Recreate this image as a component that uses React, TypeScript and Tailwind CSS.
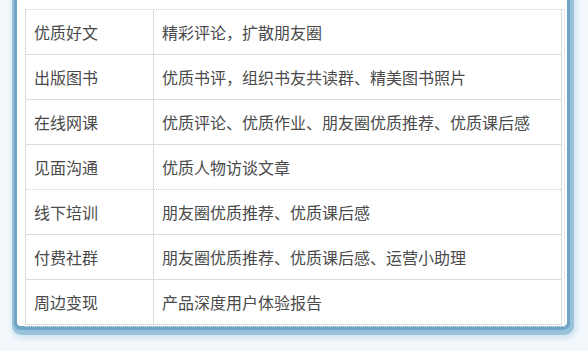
const rows: [string, string, boolean][] = [
  ['优质好文', '精彩评论，扩散朋友圈', false],
  ['出版图书', '优质书评，组织书友共读群、精美图书照片', false],
  ['在线网课', '优质评论、优质作业、朋友圈优质推荐、优质课后感', false],
  ['见面沟通', '优质人物访谈文章', true],
  ['线下培训', '朋友圈优质推荐、优质课后感', false],
  ['付费社群', '朋友圈优质推荐、优质课后感、运营小助理', false],
  ['周边变现', '产品深度用户体验报告', false],
]

export default function App() {
  return (
    <div
      className="w-[588px] h-[351px] overflow-hidden bg-[#f3f8fc]"
      style={{ fontFamily: '"Microsoft YaHei", "Noto Sans CJK SC", sans-serif' }}
    >
      <div className="ml-[17px] w-[550px] h-[326px] bg-white rounded-b-[4px] pt-[9px] pl-[8px] pr-[2px] shadow-[0_1px_0_3px_#6fa6c6,1px_3px_0_6px_#98c2da,2px_5px_4px_8px_#d6e7f2]">
        <div className="border-t border-dotted border-[#c9cdd0] border-r border-b border-r-[#d8dcde] border-b-[#d8dcde] pr-[2px] pb-[1px]">
          <div className="border-l border-r border-[#d8dcde] text-[16px] text-[#4a4a4a]">
            {rows.map(([k, v, dotted]) => (
              <div
                key={k}
                className={
                  'flex h-[45px] ' +
                  (dotted ? 'border-b border-dotted border-[#c9cdd0]' : 'border-b border-[#d8dcde]')
                }
              >
                <div className="w-[128px] shrink-0 border-r border-[#d8dcde] pl-[8px] flex items-center">{k}</div>
                <div className="flex-1 pl-[8px] flex items-center">{v}</div>
              </div>
            ))}
          </div>
        </div>
      </div>
    </div>
  )
}
